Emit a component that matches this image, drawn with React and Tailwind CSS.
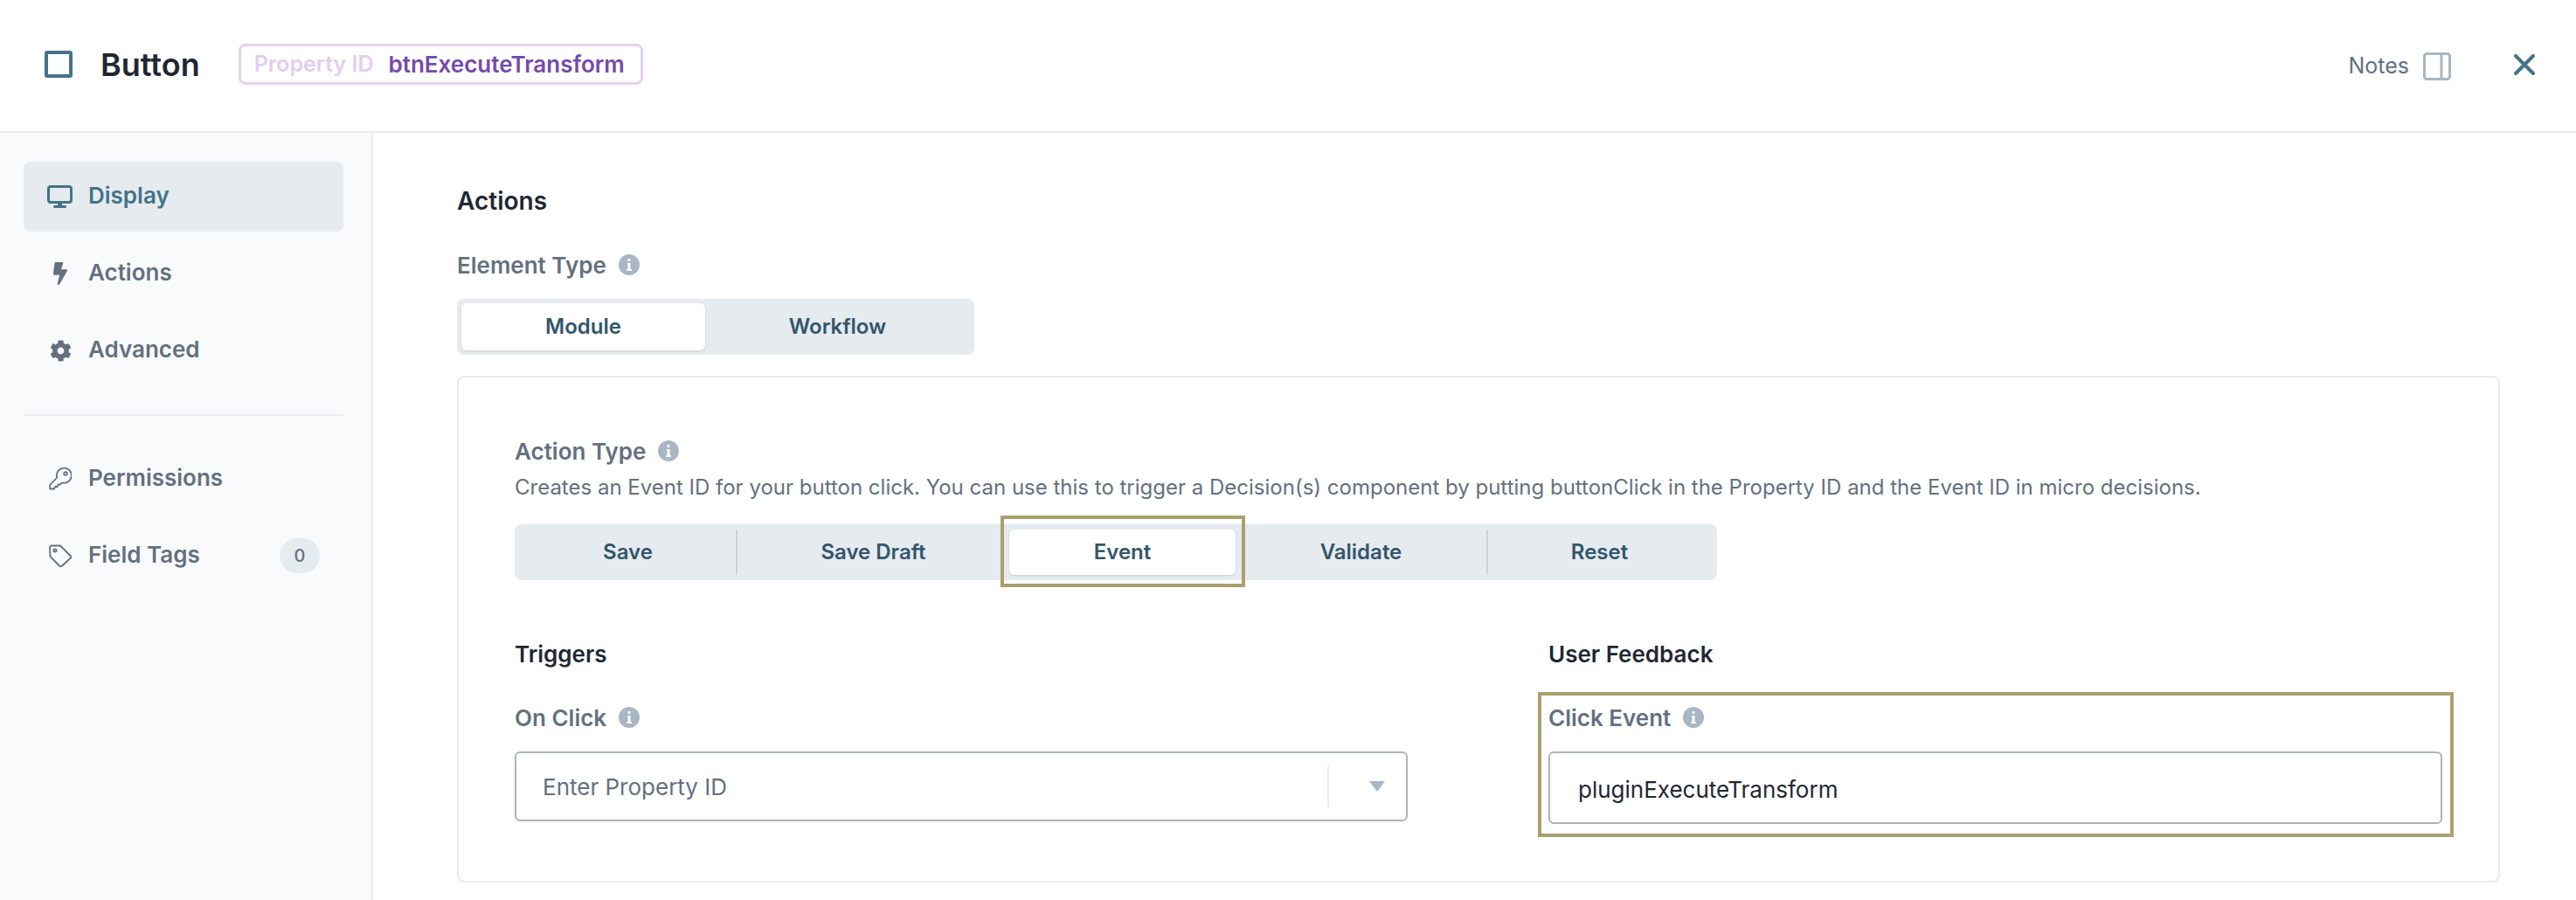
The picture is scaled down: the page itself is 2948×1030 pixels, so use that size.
import React from "react";
import { FaBolt, FaCog } from "react-icons/fa";

const inter = "font-['Inter',sans-serif]";

const InfoDot = () => (
  <span className="ml-[14px] flex h-[24px] w-[24px] shrink-0 items-center justify-center rounded-full bg-[#a9b6c4]">
    <svg width="6" height="14" viewBox="0 0 6 14" fill="#fff">
      <rect x="1.5" y="0" width="3" height="3" rx="1" />
      <path d="M1 5h3.5v7H6v2H0v-2h1.5V7H1z" />
    </svg>
  </span>
);

const FieldLabel = ({ children }) => (
  <div className="flex h-[24px] items-center text-[26px] font-semibold text-[#64707f]">
    {children}
    <InfoDot />
  </div>
);

const SideItem = ({ icon, label, active, badge }) => (
  <div
    className={`flex h-[80px] items-center rounded-[8px] pl-[27px] pr-[27px] text-[26px] font-semibold ${
      active ? "bg-[#e6ebef] text-[#44738a]" : "text-[#64707f]"
    }`}
  >
    <span className="flex w-[47px] shrink-0 items-center">{icon}</span>
    <span className="pb-[3px]">{label}</span>
    {badge && (
      <span className="ml-auto flex h-[40px] w-[46px] items-center justify-center rounded-full bg-[#e6ebef] text-[20px] font-medium text-[#64707f]">
        {badge}
      </span>
    )}
  </div>
);

const segments = [
  { label: "Save", width: "w-[247px]" },
  { label: "Save Draft", width: "w-[313px]", divider: true },
  { label: "Event", width: "w-[259px]", active: true },
  { label: "Validate", width: "w-[287px]" },
  { label: "Reset", width: "w-[257px]", divider: true },
];

export default function App() {
  return (
    <div className={`h-[1030px] w-[2948px] overflow-hidden bg-white ${inter}`}>
      {/* top bar */}
      <header className="flex h-[152px] items-center border-b-2 border-[#e8ecef] pb-[3px] pl-[51px] pr-[47px]">
        <span className="h-[31px] w-[32px] rounded-[3px] border-[4px] border-[#44738a]" />
        <h1 className="ml-[32px] text-[36px] font-semibold leading-none text-[#1f2733]">Button</h1>
        <div className="ml-[44px] flex h-[47px] w-[463px] items-center rounded-[8px] border-[3px] border-[#e5d2f0] pl-[15px] font-semibold">
          <span className="text-[25px] text-[#e2cdf2]">Property ID</span>
          <span className="ml-[17px] text-[26px] text-[#7549ad]">btnExecuteTransform</span>
        </div>
        <div className="ml-auto mt-[5px] flex items-center">
          <span className="text-[25px] text-[#64707f]">Notes</span>
          <svg className="ml-[16px]" width="32" height="32" viewBox="0 0 32 32" fill="none" stroke="#a9b6c4" strokeWidth="3">
            <rect x="1.5" y="1.5" width="29" height="29" rx="3" />
            <path d="M21 2v28" />
          </svg>
        </div>
        <svg className="ml-[72px]" width="24" height="24" viewBox="0 0 24 24" fill="none" stroke="#44738a" strokeWidth="4" strokeLinecap="round">
          <path d="M2 2l20 20M22 2L2 22" />
        </svg>
      </header>

      <div className="flex h-[878px]">
        {/* left nav */}
        <aside className="w-[427px] shrink-0 border-r-2 border-[#e8ecef] bg-[#f9fafc] pl-[27px] pr-[32px] pt-[33px]">
          <SideItem
            active
            label="Display"
            icon={
              <svg width="30" height="26" viewBox="0 0 30 26" fill="#44738a" stroke="none">
                <rect x="1.5" y="1.5" width="26" height="18" rx="2.5" fill="none" stroke="#44738a" strokeWidth="3" />
                <rect x="12" y="20" width="5" height="4" />
                <rect x="7" y="23" width="15" height="3" rx="1.5" />
              </svg>
            }
          />
          <div className="mt-[8px]">
            <SideItem label="Actions" icon={<FaBolt className="ml-[2px] text-[#64707f]" size={26} />} />
          </div>
          <div className="mt-[8px]">
            <SideItem label="Advanced" icon={<FaCog className="ml-[3px] text-[#64707f]" size={25} />} />
          </div>
          <div className="mt-[33px] h-[2px] bg-[#e8ecef]" />
          <div className="mt-[32px]">
            <SideItem
              label="Permissions"
              icon={
                <svg className="ml-[2px]" width="26" height="26" viewBox="0 0 26 26" fill="none" stroke="#64707f" strokeWidth="1.8" strokeLinejoin="round">
                  <path d="M9.2 11.5A8.5 8.5 0 1 1 15 17.3L13 19.5H10.5L9.7 22H7L6 24.5H1.2V20z" />
                  <circle cx="19" cy="7" r="1.8" />
                </svg>
              }
            />
          </div>
          <div className="mt-[8px]">
            <SideItem
              label="Field Tags"
              badge="0"
              icon={
                <svg className="ml-[2px]" width="26" height="26" viewBox="0 0 26 26" fill="none" stroke="#64707f" strokeWidth="1.8" strokeLinejoin="round">
                  <path d="M1 3.5a2 2 0 0 1 2-2H13L25 13.5a1.5 1.5 0 0 1 0 2L14.5 25a1.5 1.5 0 0 1-2 0L1.5 14z" />
                  <circle cx="7" cy="7" r="1.6" />
                </svg>
              }
            />
          </div>
        </aside>

        {/* form */}
        <main className="flex-1 pl-[96px] pr-[87px]">
          <h2 className="mt-[64px] flex h-[28px] items-center text-[28px] font-semibold text-[#1f2733]">Actions</h2>
          <div className="mt-[47px]">
            <FieldLabel>Element Type</FieldLabel>
          </div>
          <div className="mt-[27px] flex h-[64px] w-[592px] rounded-[8px] bg-[#e6ebef] p-[5px] text-[24px] font-semibold text-[#33566b]">
            <div className="flex w-[279px] items-center justify-center rounded-[6px] bg-white shadow-sm">Module</div>
            <div className="flex flex-1 items-center justify-center">Workflow</div>
          </div>

          <section className="mt-[24px] h-[580px] rounded-[8px] border-2 border-[#e8ecef] pl-[64px] pr-[52px] pt-[72px]">
            <FieldLabel>Action Type</FieldLabel>
            <p className="mt-[14px] text-[24px] leading-[32px] text-[#64707f]">
              Creates an Event ID for your button click. You can use this to trigger a Decision(s) component by putting buttonClick in the Property ID and the Event ID in micro decisions.
            </p>
            <div className="mt-[26px] flex h-[64px] w-[1376px] rounded-[8px] bg-[#e6ebef] p-[6px] text-[24px] font-semibold text-[#33566b]">
              {segments.map((s) => (
                <div key={s.label} className={`relative flex items-center justify-center ${s.width} ${s.divider ? "border-l-2 border-[#c9d3da]" : ""} ${s.active ? "rounded-[6px] bg-white shadow-sm" : ""}`}>
                  {s.active && <span className="absolute -bottom-[14px] -left-[10px] -right-[11px] -top-[16px] border-[4px] border-[#ab9f6e]" />}
                  {s.label}
                </div>
              ))}
            </div>

            <div className="mt-[72px] flex">
              <div className="w-[1022px] shrink-0">
                <h3 className="flex h-[24px] items-center text-[26px] font-semibold text-[#1f2733]">Triggers</h3>
                <div className="mt-[49px]">
                  <FieldLabel>On Click</FieldLabel>
                </div>
                <div className="mt-[27px] flex h-[80px] items-center rounded-[6px] border-2 border-[#a9b4be] pl-[30px] text-[26px] text-[#64707f]">
                  <span className="flex-1">Enter Property ID</span>
                  <span className="h-[47px] w-[2px] bg-[#e8ecef]" />
                  <span className="ml-[46px] mr-[24px] h-0 w-0 border-x-[9px] border-t-[12px] border-x-transparent border-t-[#a9b6c4]" />
                </div>
              </div>

              <div className="ml-[161px] w-[1023px] shrink-0">
                <h3 className="flex h-[24px] items-center text-[26px] font-semibold text-[#1f2733]">User Feedback</h3>
                <div className="relative mt-[49px]">
                  <span className="absolute -bottom-[15px] -left-[12px] -right-[13px] -top-[17px] border-[4px] border-[#ab9f6e]" />
                  <FieldLabel>Click Event</FieldLabel>
                  <div className="mt-[27px] flex h-[83px] items-center rounded-[6px] border-2 border-[#a9b4be] pl-[32px] pt-[3px] text-[26px] text-[#1f2733]">
                    pluginExecuteTransform
                  </div>
                </div>
              </div>
            </div>
          </section>
        </main>
      </div>
    </div>
  );
}
